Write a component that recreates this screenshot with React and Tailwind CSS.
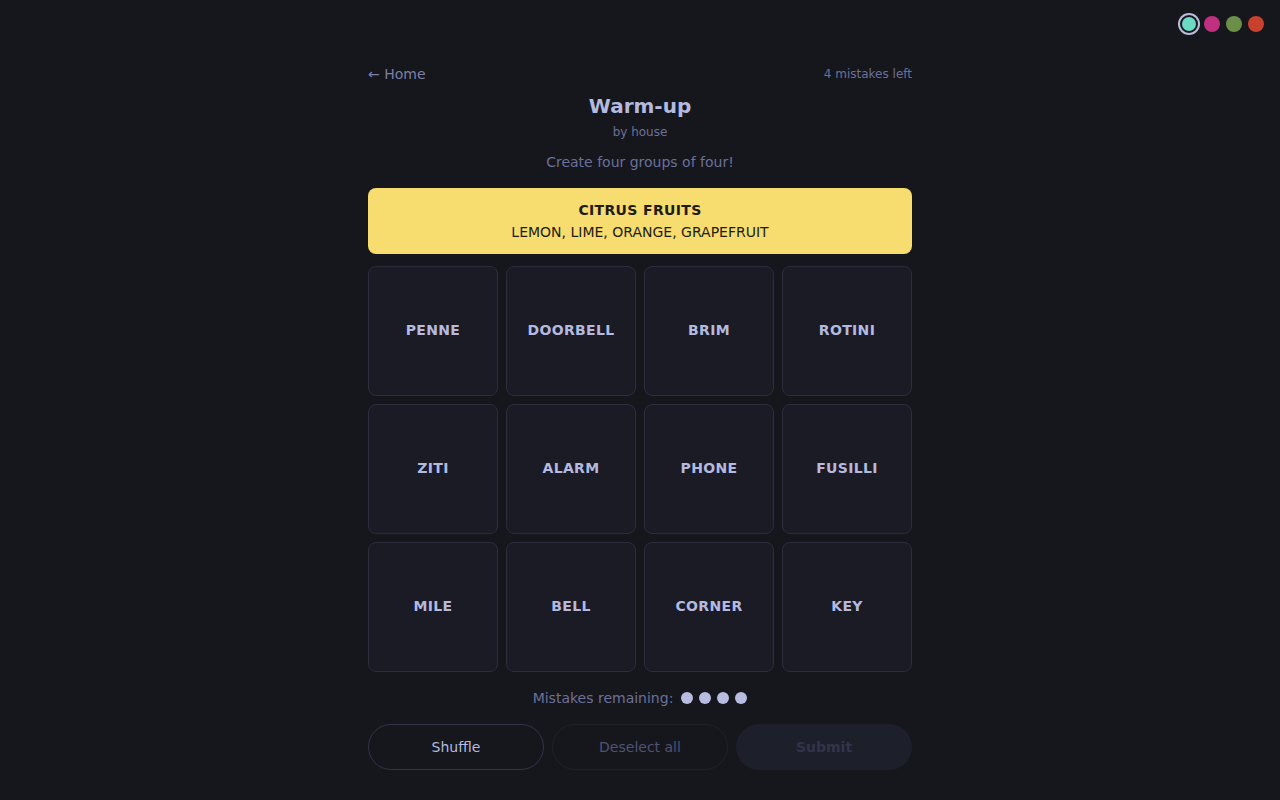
import { useState } from "react";

const tiles = [
  "PENNE", "DOORBELL", "BRIM", "ROTINI",
  "ZITI", "ALARM", "PHONE", "FUSILLI",
  "MILE", "BELL", "CORNER", "KEY",
];

const themes = [
  { name: "mint", cls: "bg-[#6cd9c2]" },
  { name: "pink", cls: "bg-[#c0307f]" },
  { name: "olive", cls: "bg-[#6b8f48]" },
  { name: "red", cls: "bg-[#c9412e]" },
];

const App = () => {
  const [theme, setTheme] = useState("mint");

  return (
    <div className="min-h-[800px] bg-[#16171d] text-[#b4badf] font-['DejaVu_Sans',sans-serif] relative">
      {/* Theme picker */}
      <div className="absolute top-[15px] right-[16px] flex items-center gap-[6px]">
        {themes.map((t) => (
          <button
            key={t.name}
            onClick={() => setTheme(t.name)}
            className={`w-4 h-4 rounded-full ${t.cls} ${
              theme === t.name ? "ring-2 ring-[#b8bcd8] ring-offset-0 w-[18px] h-[18px] border-2 border-[#16171d]" : ""
            }`}
          />
        ))}
      </div>

      <div className="w-[544px] mx-auto pt-[64px]">
        <div className="flex justify-between items-center h-[20px]">
          <a className="text-sm text-[#7a7fa8]">← Home</a>
          <span className="text-xs text-[#6c7099]">4 mistakes left</span>
        </div>

        <h1 className="text-center text-xl font-bold text-[#b4badf] mt-[8px] leading-[28px]">
          Warm-up
        </h1>
        <p className="text-center text-xs text-[#6c7099] mt-[4px]">by house</p>
        <p className="text-center text-sm text-[#6c7099] mt-[12px]">
          Create four groups of four!
        </p>

        <div className="mt-[16px] h-[66px] rounded-lg bg-[#f7dc6f] flex flex-col items-center justify-center text-[#1d1b12]">
          <div className="text-sm font-bold tracking-wide leading-5">CITRUS FRUITS</div>
          <div className="text-sm leading-5 mt-[2px]">LEMON, LIME, ORANGE, GRAPEFRUIT</div>
        </div>

        <div className="grid grid-cols-4 gap-2 mt-3">
          {tiles.map((w) => (
            <button
              key={w}
              className="h-[130px] rounded-lg bg-[#1b1b26] border border-[#2c2d3d] flex items-center justify-center pb-[2px] text-sm font-bold tracking-wide text-[#b4badf]"
            >
              {w}
            </button>
          ))}
        </div>

        <div className="flex items-center justify-center gap-[8px] mt-[16px] h-[20px]">
          <span className="text-sm text-[#6c7099]">Mistakes remaining:</span>
          <div className="flex gap-[6px]">
            {[0, 1, 2, 3].map((i) => (
              <span key={i} className="w-3 h-3 rounded-full bg-[#b8bce0]" />
            ))}
          </div>
        </div>

        <div className="grid grid-cols-3 gap-2 mt-[16px]">
          <button className="h-[46px] rounded-full border border-[#32344a] text-sm text-[#b4badf]">
            Shuffle
          </button>
          <button className="h-[46px] rounded-full border border-[#20212c] text-sm text-[#4f5272]">
            Deselect all
          </button>
          <button className="h-[46px] rounded-full bg-[#1d1f2b] text-sm font-bold text-[#32354a]">
            Submit
          </button>
        </div>
      </div>
    </div>
  );
};

export default App;
